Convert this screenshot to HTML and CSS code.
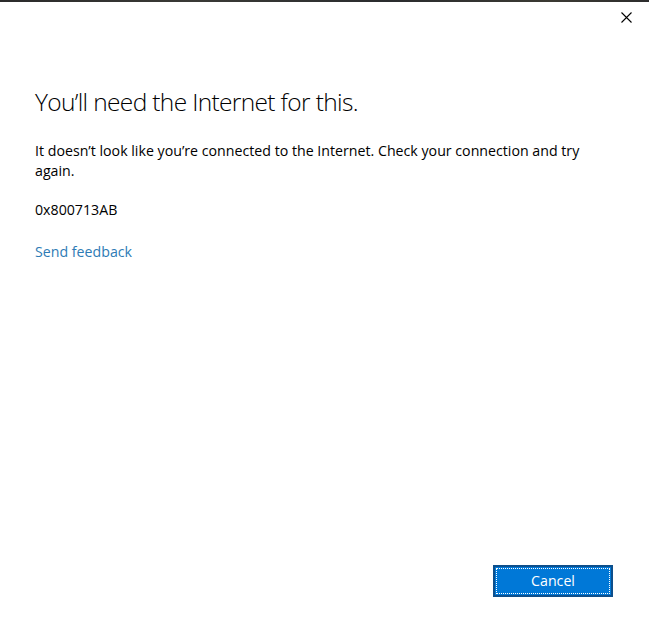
FILE: index.html
```html
<!DOCTYPE html>
<html lang="en">
<head>
<meta charset="utf-8">
<title>You'll need the Internet for this.</title>
<link rel="stylesheet" href="styles.css">
</head>
<body>
<div class="dialog">
  <div class="topbar"></div>
  <div class="titlebar">
    <button class="close" aria-label="Close">
      <svg width="11" height="11" viewBox="0 0 11 11"><path d="M0.5 0.5 L10.5 10.5 M10.5 0.5 L0.5 10.5" stroke="#000" stroke-width="1.1" fill="none"/></svg>
    </button>
  </div>
  <main class="content">
    <h1 class="title">You’ll need the Internet for this.</h1>
    <p class="message">It doesn’t look like you’re connected to the Internet. Check your connection and try again.</p>
    <p class="code">0x800713AB</p>
    <a class="feedback" href="#">Send feedback</a>
  </main>
  <footer class="actions">
    <button class="cancel"><span class="focus">Cancel</span></button>
  </footer>
</div>
</body>
</html>
```
FILE: styles.css
```css
html, body {
  margin: 0;
  padding: 0;
  background: #fff;
}
body {
  font-family: "Open Sans", "Noto Sans", sans-serif;
  color: #000;
}
.dialog {
  width: 649px;
  height: 631px;
  display: flex;
  flex-direction: column;
  box-sizing: border-box;
}
.topbar {
  height: 2px;
  background: linear-gradient(90deg, #2b2b2b, #3a3a36 30%, #2a2c2e 60%, #3b3a33 85%, #2d2d2d);
  flex: none;
}
.titlebar {
  height: 30px;
  display: flex;
  justify-content: flex-end;
  flex: none;
}
.close {
  border: 0;
  background: transparent;
  padding: 0;
  width: 46px;
  height: 30px;
  display: flex;
  align-items: center;
  justify-content: center;
}
.content {
  padding: 54px 35px 0 35px;
  flex: 1;
}
.title {
  font-weight: 300;
  font-size: 24.5px;
  line-height: 32px;
  margin: 0 0 23px 0;
  letter-spacing: -0.65px;
}
.message {
  font-size: 14.2px;
  line-height: 20px;
  margin: 0 0 19px 0;
  max-width: 560px;
}
.code {
  font-size: 14.2px;
  line-height: 20px;
  margin: 0 0 20px 0;
}
.feedback {
  font-size: 14.2px;
  line-height: 20px;
  color: #2e7bb5;
  text-decoration: none;
}
.actions {
  display: flex;
  justify-content: flex-end;
  padding: 0 36px 34px 0;
}
.cancel {
  width: 120px;
  height: 32px;
  box-sizing: border-box;
  border: 2px solid #0d4f8c;
  background: #0078d7;
  padding: 1px;
  display: flex;
  font-family: "Open Sans", "Noto Sans", sans-serif;
}
.focus {
  flex: 1;
  border: 1px dotted #fff;
  color: #fff;
  font-size: 14.2px;
  line-height: 24px;
  text-align: center;
}
```
